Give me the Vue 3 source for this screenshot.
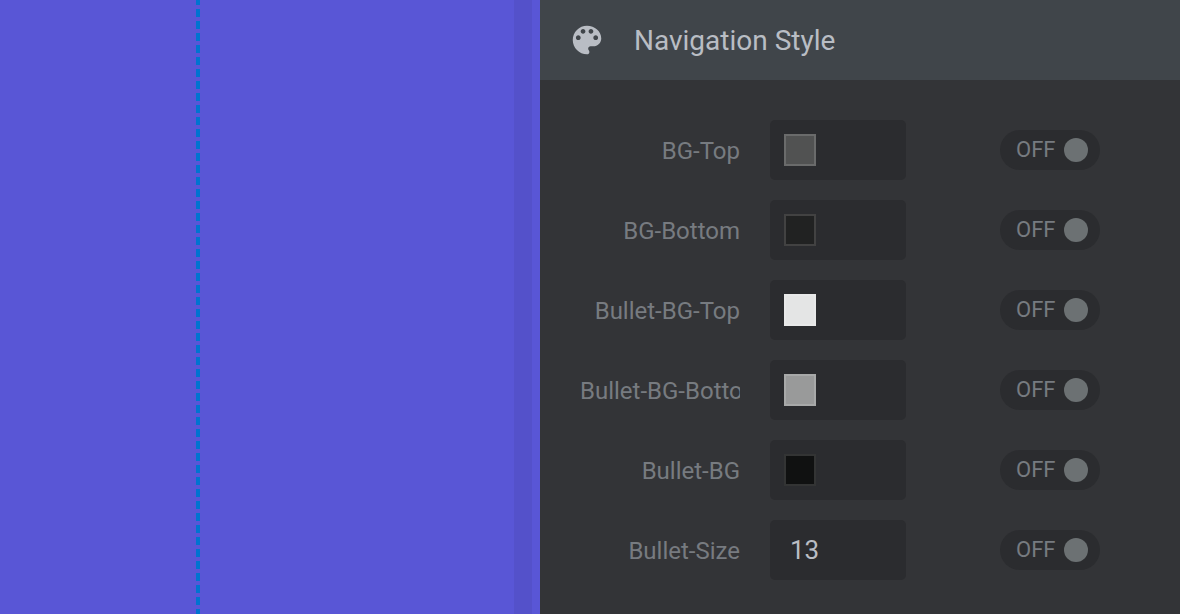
<template>
  <div class="editor">
    <main class="stage">
      <div class="guide"></div>
      <div class="track"></div>
    </main>

    <aside class="panel">
      <header class="panel-head">
        <svg class="palette" viewBox="0 0 24 24" aria-hidden="true">
          <path d="M12 3c-4.970 0-9 4.030-9 9s4.030 9 9 9c.83 0 1.500-.67 1.500-1.500 0-.39-.15-.74-.39-1.010-.23-.26-.38-.61-.38-.99 0-.83.67-1.500 1.500-1.500H16c2.760 0 5-2.240 5-5 0-4.420-4.030-8-9-8zm-5.500 9c-.83 0-1.500-.67-1.500-1.500S5.670 9 6.500 9 8 9.670 8 10.500 7.330 12 6.500 12zm3-4C8.670 8 8 7.330 8 6.500S8.670 5 9.500 5s1.500.67 1.500 1.500S10.330 8 9.500 8zm5 0c-.83 0-1.500-.67-1.500-1.500S13.670 5 14.500 5s1.500.67 1.500 1.500S15.330 8 14.500 8zm3 4c-.83 0-1.500-.67-1.500-1.500S16.670 9 17.500 9s1.500.67 1.500 1.500-.67 1.500-1.500 1.500z" />
        </svg>
        <h1>Navigation Style</h1>
      </header>

      <form class="options">
        <div v-for="option in options" :key="option.id" class="row">
          <label class="name" :for="option.id">{{ option.label }}</label>
          <div class="field">
            <input
              v-if="option.type === 'color'"
              :id="option.id"
              v-model="option.value"
              class="swatch"
              type="color"
            />
            <input v-else :id="option.id" v-model="option.value" class="number" type="text" />
          </div>
          <label class="toggle">
            <span>{{ option.enabled ? "ON" : "OFF" }}</span>
            <input v-model="option.enabled" type="checkbox" />
          </label>
        </div>
      </form>
    </aside>
  </div>
</template>

<script setup>
import { reactive } from "vue";

const options = reactive([
  { id: "bg-top", label: "BG-Top", type: "color", value: "#515252", enabled: false },
  { id: "bg-bottom", label: "BG-Bottom", type: "color", value: "#212222", enabled: false },
  { id: "bullet-bg-top", label: "Bullet-BG-Top", type: "color", value: "#e4e5e5", enabled: false },
  { id: "bullet-bg-bottom", label: "Bullet-BG-Bottom", type: "color", value: "#999a9a", enabled: false },
  { id: "bullet-bg", label: "Bullet-BG", type: "color", value: "#101111", enabled: false },
  { id: "bullet-size", label: "Bullet-Size", type: "text", value: "13", enabled: false },
]);
</script>

<style>
body {
  margin: 0;
  background: #333437;
}
</style>

<style scoped>
.editor {
  display: flex;
  min-height: 100vh;
  font-family: Roboto, "Liberation Sans", sans-serif;
  color: #b9bdc4;
}

.stage {
  flex: 1;
  display: flex;
  justify-content: space-between;
  padding: 0 8px 0 196px;
  background: #5956d6;
}

.guide {
  width: 4px;
  background: repeating-linear-gradient(#0073d0 0 5px, transparent 5px 9px, #0073d0 9px 12px);
}

.track {
  width: 18px;
  background: #5451ca;
}

.panel {
  flex: 0 0 640px;
  background: #333437;
}

.panel-head {
  display: flex;
  align-items: center;
  gap: 28px;
  height: 80px;
  padding: 0 28px;
  background: #40454a;
}

.palette {
  width: 38px;
  height: 38px;
  fill: #b9bdc4;
}

h1 {
  margin: 0;
  padding-top: 2px;
  font-size: 28px;
  font-weight: 400;
  line-height: 40px;
}

.options {
  display: grid;
  gap: 20px;
  padding: 40px 80px 34px 40px;
}

.row {
  display: flex;
  align-items: center;
}

.name {
  width: 160px;
  margin-right: 30px;
  padding-top: 2px;
  overflow: hidden;
  color: #777b80;
  font-size: 24px;
  line-height: 40px;
  text-align: right;
  white-space: nowrap;
}

.field {
  display: flex;
  align-items: center;
  width: 136px;
  height: 60px;
  border-radius: 5px;
  background: #2b2c2f;
}

.swatch {
  appearance: none;
  box-sizing: border-box;
  width: 32px;
  height: 32px;
  margin-left: 14px;
  padding: 0;
  border: 0;
  background: none;
  cursor: pointer;
}

.swatch::-webkit-color-swatch-wrapper {
  padding: 0;
}

.swatch::-webkit-color-swatch {
  box-sizing: border-box;
  border: 2px solid rgba(255, 255, 255, 0.15);
  border-radius: 0;
}

.number {
  box-sizing: border-box;
  width: 100%;
  height: 100%;
  padding: 0 20px;
  border: 0;
  outline: 0;
  background: none;
  color: inherit;
  font: 26px Roboto, "Liberation Sans", sans-serif;
}

.toggle {
  display: flex;
  align-items: center;
  justify-content: space-between;
  box-sizing: border-box;
  width: 100px;
  height: 40px;
  margin-left: auto;
  padding: 0 12px 0 16px;
  border-radius: 20px;
  background: #2b2c2f;
  color: #777b80;
  font-size: 22px;
  line-height: 40px;
  cursor: pointer;
}

.toggle input {
  appearance: none;
  width: 24px;
  height: 24px;
  margin: 0;
  border-radius: 50%;
  background: #6c7173;
  cursor: pointer;
}

.toggle input:checked {
  background: #b9bdc4;
}
</style>
